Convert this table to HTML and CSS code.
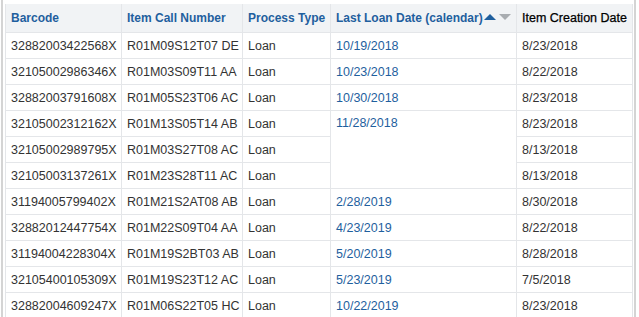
FILE: index.html
```html
<!DOCTYPE html>
<html>
<head>
<meta charset="utf-8">
<link rel="stylesheet" href="styles.css">
</head>
<body>
<div class="wrap">
<table class="grid">
<colgroup>
<col class="c1"><col class="c2"><col class="c3"><col class="c4"><col class="c5">
</colgroup>
<thead>
<tr>
<th class="link">Barcode</th>
<th class="link">Item Call Number</th>
<th class="link">Process Type</th>
<th class="link">Last Loan Date (calendar)<span class="sort"><span class="up"></span><span class="down"></span></span></th>
<th class="plain">Item Creation Date</th>
</tr>
</thead>
<tbody>
<tr><td>32882003422568X</td><td>R01M09S12T07 DE</td><td>Loan</td><td class="link">10/19/2018</td><td>8/23/2018</td></tr>
<tr><td>32105002986346X</td><td>R01M03S09T11 AA</td><td>Loan</td><td class="link">10/23/2018</td><td>8/22/2018</td></tr>
<tr><td>32882003791608X</td><td>R01M05S23T06 AC</td><td>Loan</td><td class="link">10/30/2018</td><td>8/23/2018</td></tr>
<tr><td>32105002312162X</td><td>R01M13S05T14 AB</td><td>Loan</td><td class="link top" rowspan="3">11/28/2018</td><td>8/23/2018</td></tr>
<tr><td>32105002989795X</td><td>R01M03S27T08 AC</td><td>Loan</td><td>8/13/2018</td></tr>
<tr><td>32105003137261X</td><td>R01M23S28T11 AC</td><td>Loan</td><td>8/13/2018</td></tr>
<tr><td>31194005799402X</td><td>R01M21S2AT08 AB</td><td>Loan</td><td class="link">2/28/2019</td><td>8/30/2018</td></tr>
<tr><td>32882012447754X</td><td>R01M22S09T04 AA</td><td>Loan</td><td class="link">4/23/2019</td><td>8/22/2018</td></tr>
<tr><td>31194004228304X</td><td>R01M19S2BT03 AB</td><td>Loan</td><td class="link">5/20/2019</td><td>8/28/2018</td></tr>
<tr><td>32105400105309X</td><td>R01M19S23T12 AC</td><td>Loan</td><td class="link">5/23/2019</td><td>7/5/2018</td></tr>
<tr><td>32882004609247X</td><td>R01M06S22T05 HC</td><td>Loan</td><td class="link">10/22/2019</td><td>8/23/2018</td></tr>
</tbody>
</table>
</div>
</body>
</html>
```
FILE: styles.css
```css
html, body {
  margin: 0;
  padding: 0;
  background: #fff;
}
.wrap {
  margin-left: 1px;
  padding: 4px 2px 0 2px;
  border-left: 2px solid #d4d4d4;
  border-right: 2px solid #d4d4d4;
  width: 627px;
}
.grid {
  border-collapse: collapse;
  table-layout: fixed;
  width: 627px;
  font-family: "Liberation Sans", Arial, sans-serif;
  font-size: 12.5px;
  color: #333;
}
.c1 { width: 116px; }
.c2 { width: 121px; }
.c3 { width: 88px; }
.c4 { width: 186px; }
.c5 { width: 116px; }
.grid th, .grid td {
  border: 1px solid #e4e6e9;
  padding: 0 5px;
  text-align: left;
  white-space: nowrap;
  overflow: hidden;
}
.grid thead th {
  border-top: none;
}
.grid th {
  height: 28px;
  background: #f1f3f5;
  font-weight: bold;
  font-size: 12px;
  color: #222;
}
.grid th.plain {
  font-weight: normal;
  font-size: 12.5px;
  color: #000;
  -webkit-text-stroke: 0.25px #000;
}
.grid td {
  height: 25px;
}
.grid .link {
  color: #1f5f9e;
}
.grid td.top {
  vertical-align: top;
  padding-top: 5px;
}
.sort {
  display: inline-flex;
  align-items: center;
  gap: 3px;
  margin-left: 1px;
  vertical-align: 2px;
}
.up {
  width: 0;
  height: 0;
  border-left: 6px solid transparent;
  border-right: 6px solid transparent;
  border-bottom: 6px solid #1f5f9e;
}
.down {
  width: 0;
  height: 0;
  border-left: 6px solid transparent;
  border-right: 6px solid transparent;
  border-top: 6px solid #a8acb0;
}
```
